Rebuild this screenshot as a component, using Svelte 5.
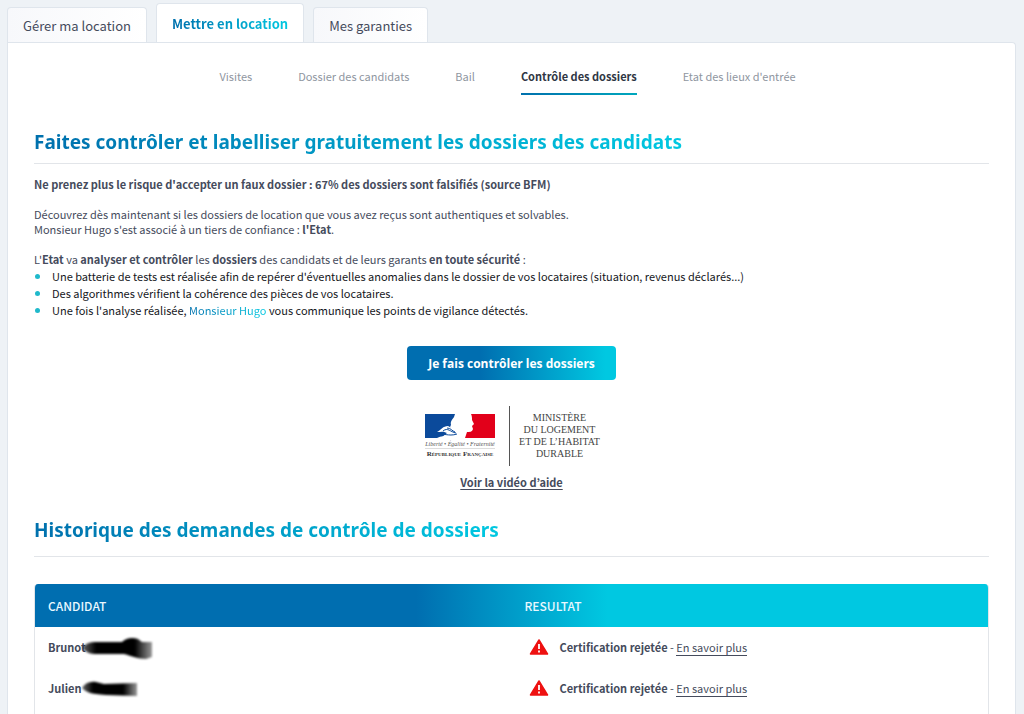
<script lang="ts">
  interface Request {
    name: string;
    mask: string;
    result: string;
  }

  const tabs = ['Gérer ma location', 'Mettre en location', 'Mes garanties'];
  const steps = [
    'Visites',
    'Dossier des candidats',
    'Bail',
    'Contrôle des dossiers',
    "Etat des lieux d'entrée"
  ];

  const requests: Request[] = [
    {
      name: 'Brunot',
      mask: 'M2 13 C5 9 9 7 14 7 L42 7 C46 3 52 2 58 4 L62 7 L72 7 L72 22 L66 24 C58 24 52 21 44 19 L14 19 C9 19 5 16 2 13Z',
      result: 'Certification rejetée'
    },
    {
      name: 'Julien',
      mask: 'M6 12 C9 7 14 5 20 6 L28 8 L61 7 L61 20 L30 19 C22 18 17 18 14 17 C11 16 8 14 6 12Z',
      result: 'Certification rejetée'
    }
  ];

  let activeTab = $state(1);
  let activeStep = $state(3);
</script>

<div class="page">
  <div class="tabs" role="tablist">
    {#each tabs as tab, i}
      <button class="tab" class:active={i === activeTab} role="tab" aria-selected={i === activeTab} onclick={() => (activeTab = i)}>
        <span>{tab}</span>
      </button>
    {/each}
  </div>

  <main class="panel">
    <nav class="steps">
      {#each steps as step, i}
        <button class="step" class:current={i === activeStep} onclick={() => (activeStep = i)}>{step}</button>
      {/each}
    </nav>

    <h2><span>Faites contrôler et labelliser gratuitement les dossiers des candidats</span></h2>

    <div class="intro">
      <p><b>Ne prenez plus le risque d'accepter un faux dossier : 67% des dossiers sont falsifiés (source BFM)</b></p>
      <p>
        Découvrez dès maintenant si les dossiers de location que vous avez reçus sont authentiques et solvables.<br />
        Monsieur Hugo s'est associé à un tiers de confiance : <b>l'Etat</b>.
      </p>
      <p>
        L'<b>Etat</b> va <b>analyser et contrôler</b> les <b>dossiers</b> des candidats et de leurs garants
        <b>en toute sécurité</b> :
      </p>
      <ul>
        <li>Une batterie de tests est réalisée afin de repérer d'éventuelles anomalies dans le dossier de vos locataires (situation, revenus déclarés...)</li>
        <li>Des algorithmes vérifient la cohérence des pièces de vos locataires.</li>
        <li>Une fois l'analyse réalisée, <span class="brand">Monsieur Hugo</span> vous communique les points de vigilance détectés.</li>
      </ul>
    </div>

    <div class="action">
      <button class="cta">Je fais contrôler les dossiers</button>

      <div class="ministry">
        <svg class="marianne" width="74" height="46" viewBox="0 0 74 46" role="img" aria-label="République Française">
          <rect x="2" y="1" width="36" height="24" fill="#0b4a9b" />
          <rect x="41" y="1" width="31" height="24" fill="#e2001a" />
          <path
            d="M32 1 L48 1 C49 3 49 5 49 7 L51 11 L49 13 L50 16 C49 19 47 19 44 19 L42 25 L14 25 C18 23 22 23 26 22 L30 19 C28 17 26 15 28 12 C27 8 30 6 31 4Z"
            fill="#fff"
          />
          <path d="M14 19 C18 17 20 13 25 13 C29 15 31 19 35 20 L35 24 L18 25 L24 20 C20 18 18 19 14 19Z" fill="#fff" />
          <path d="M16 23 C20 19 25 24 34 21 M20 18 C25 14 27 19 33 20 M24 15 C28 15 29 18 32 19" fill="none" stroke="#0b4a9b" />
          <text class="motto" x="37" y="33" text-anchor="middle">Liberté • Égalité • Fraternité</text>
          <path d="M2 35.500H72" stroke="#bbb" stroke-width="0.5" />
          <text class="republic" x="37" y="43" text-anchor="middle">R<tspan class="caps">ÉPUBLIQUE</tspan> F<tspan class="caps">RANÇAISE</tspan></text>
        </svg>
        <div class="ministry-name">
          Ministère<br />du Logement<br />et de l’Habitat<br />Durable
        </div>
      </div>

      <a class="help" href="#video">Voir la vidéo d’aide</a>
    </div>

    <h2 class="history"><span>Historique des demandes de contrôle de dossiers</span></h2>

    <div class="table-box">
      <table>
        <thead>
          <tr>
            <th>CANDIDAT</th>
            <th>RESULTAT</th>
          </tr>
        </thead>
        <tbody>
          {#each requests as request, i}
            <tr>
              <td>
                <div class="person">
                  <b>{request.name}</b>
                  <svg class="mask" width="76" height="26" viewBox="0 0 76 26" aria-hidden="true">
                    <linearGradient id="fade-{i}">
                      <stop offset="0" stop-opacity="0.6" />
                      <stop offset="0.2" />
                      <stop offset="0.75" />
                      <stop offset="1" stop-opacity="0.4" />
                    </linearGradient>
                    <path d={request.mask} fill="url(#fade-{i})" />
                  </svg>
                </div>
              </td>
              <td>
                <div class="result">
                  <svg width="20" height="18" viewBox="0 0 20 18" aria-hidden="true">
                    <path d="M10 1 L18.500 15 H1.500Z" fill="#ee1111" stroke="#ee1111" stroke-width="1.500" stroke-linejoin="round" />
                    <path d="M10 5V10M10 11.500V13.500" stroke="#fff" stroke-width="1.800" />
                  </svg>
                  <span><b>{request.result}</b> - <a href="#details">En savoir plus</a></span>
                </div>
              </td>
            </tr>
          {/each}
        </tbody>
      </table>
    </div>
  </main>
</div>

<style>
  :global(body) {
    margin: 0;
    background: #eef2f6;
  }

  .page {
    box-sizing: border-box;
    min-height: 100vh;
    display: flex;
    flex-direction: column;
    padding: 3px 8px 0 7px;
    font-family: 'Noto Sans CJK JP', 'Noto Sans', sans-serif;
    font-size: 11px;
    line-height: 15px;
    color: #454b5c;
  }

  button {
    font: inherit;
    color: inherit;
    border: none;
    background: none;
    padding: 0;
    cursor: pointer;
  }

  .tabs {
    display: flex;
    align-items: flex-end;
    gap: 9px;
  }

  .tab {
    height: 35px;
    padding: 0 15px;
    border: 1px solid #dfe5ec;
    border-bottom: none;
    border-radius: 4px 4px 0 0;
    background: linear-gradient(90deg, #f7f8fb, #fff);
    font-size: 13px;
  }

  .tab.active {
    height: 40px;
    margin-bottom: -1px;
    background: #fff;
    font-weight: 700;
  }

  .tab.active span,
  h2 span,
  .brand {
    background: linear-gradient(90deg, #0070ad, #00c8e1);
    background-clip: text;
    -webkit-background-clip: text;
    color: transparent;
  }

  .panel {
    flex: 1;
    display: flex;
    flex-direction: column;
    padding: 26px 26px 0;
    border: 1px solid #dfe5ec;
    border-bottom: none;
    border-radius: 0 4px 0 0;
    background: #fff;
  }

  .steps {
    display: flex;
    justify-content: center;
    gap: 46px;
    padding-right: 8px;
  }

  .step {
    padding-bottom: 9px;
    border-bottom: 2px solid transparent;
    color: #8f969f;
  }

  .step.current {
    border-image: linear-gradient(90deg, #0070ad, #00a8bd) 1;
    color: #2f3644;
    font-weight: 700;
  }

  h2 {
    margin: 34px 0 13px;
    padding-bottom: 8px;
    border-bottom: 1px solid #e2e5e9;
    font-family: 'Noto Sans', 'Open Sans', sans-serif;
    font-size: 19px;
    font-weight: 700;
    line-height: 26px;
  }

  .intro p {
    margin: 0 0 15px;
  }

  .intro ul {
    margin: -15px 0 0;
    padding: 1px 0 0;
    list-style: none;
    color: #15171c;
  }

  .intro li {
    display: flex;
    align-items: center;
    white-space: pre-wrap;
    line-height: 17px;
  }

  .intro li::before {
    content: '';
    width: 5px;
    height: 5px;
    margin: 0 12px 0 1px;
    border-radius: 50%;
    background: #1fb9cb;
  }

  .action {
    display: flex;
    flex-direction: column;
    align-items: center;
    padding-top: 27px;
  }

  .cta {
    height: 34px;
    padding: 0 21px;
    border-radius: 4px;
    background: linear-gradient(90deg, #006eb0 35%, #00c8e1 95%);
    color: #fff;
    font-family: 'Open Sans', sans-serif;
    font-size: 12px;
    font-weight: 700;
  }

  .ministry {
    display: flex;
    align-items: center;
    margin: 26px 0 9px;
  }

  .marianne {
    margin-right: 12px;
  }

  .motto {
    font: italic 6px 'Liberation Serif', serif;
    fill: #555;
  }

  .republic {
    font: bold 7px 'Liberation Serif', serif;
    fill: #333;
  }

  .caps {
    font-size: 5px;
  }

  .ministry-name {
    padding: 6px 0 6px 9px;
    border-left: 1px solid #555;
    font-family: 'Liberation Serif', serif;
    font-size: 10px;
    line-height: 12px;
    text-align: center;
    text-transform: uppercase;
    color: #444;
  }

  .help {
    color: inherit;
    font-weight: 700;
    text-underline-offset: 2px;
  }

  h2.history {
    margin: 27px 0 27px;
    padding-bottom: 13px;
  }

  .table-box {
    flex: 1;
    border: 1px solid #e2e5e9;
    border-top: none;
    border-bottom: none;
    border-radius: 4px 4px 0 0;
    overflow: hidden;
  }

  table {
    width: 100%;
    table-layout: fixed;
    border-collapse: collapse;
  }

  thead tr {
    background: linear-gradient(90deg, #006eb0 40%, #00c8e1 60%);
  }

  th {
    height: 43px;
    padding: 0 13px;
    color: #e9f8ff;
    font-size: 12px;
    font-weight: 500;
    text-align: left;
  }

  td {
    height: 41px;
    padding: 0 13px;
  }

  .person,
  .result {
    display: flex;
    align-items: center;
  }

  .mask {
    margin: -4px 0 -4px -6px;
    filter: blur(1px);
  }

  .result svg {
    margin: 0 11px 0 4px;
  }

  .result a {
    color: inherit;
    text-decoration: none;
    border-bottom: 1px solid #454b5c;
  }
</style>
